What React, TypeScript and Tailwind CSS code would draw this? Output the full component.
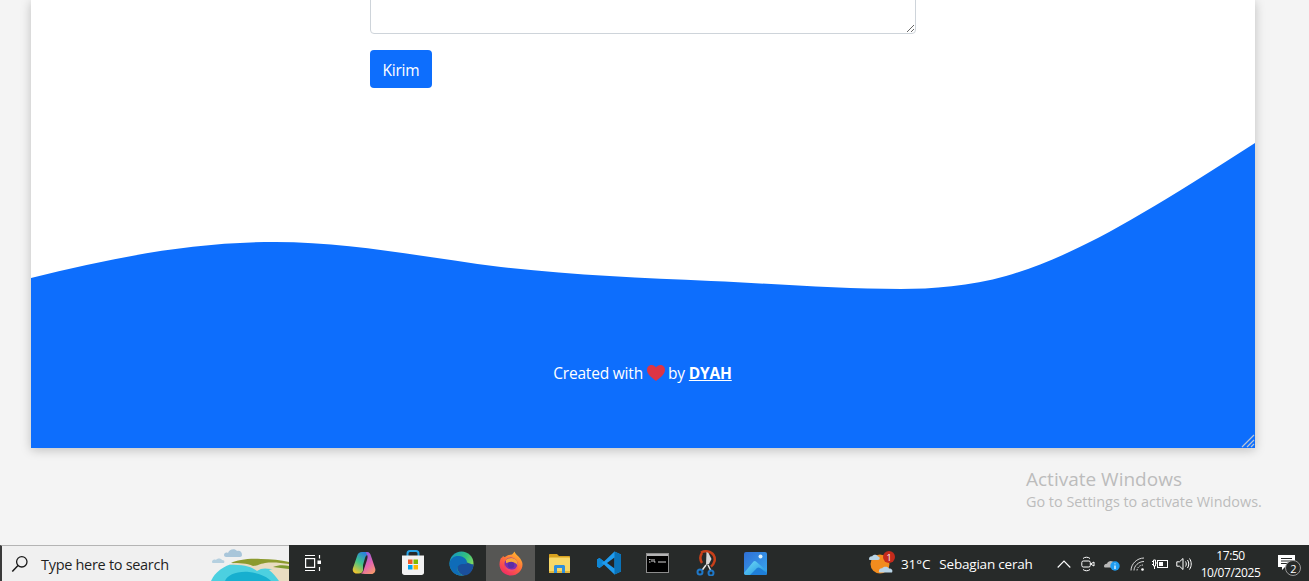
import React from 'react'

const uiFont = 'font-["Open_Sans","Noto_Sans",sans-serif]'

function SearchIcon() {
  return (
    <svg width="18" height="18" viewBox="0 0 18 18" fill="none" stroke="#1a1a1a" strokeWidth="1.3">
      <circle cx="10.800" cy="6.800" r="5.200" />
      <path d="M7 10.600 1.300 16.600" strokeWidth="1.500" />
    </svg>
  )
}

function Island() {
  return (
    <svg width="78" height="36" viewBox="0 0 78 36" className="block">
      <path d="M13 10c0-2 2-3 4-2 1-4 7-5 9-2 3-1 5 1 5 4 0 1-1 2-2 2H15c-1 0-2-1-2-2z" fill="#a9c6da" />
      <path d="M1 17c0-2 2-3 4-2 1-2 5-2 6 0 2 0 3 1 2 3H3c-1 0-2 0-2-1z" fill="#b5d0e0" />
      <path d="M0 36C4 27 12 21 24 18l54 2v16z" fill="#4cd0e0" />
      <path d="M18 20c8-4 22-6 36-5l24 2v12c-6-1-12-4-18-5-6-1-10-1-14 2-4-3-12-7-28-6z" fill="#e9dcc2" />
      <path d="M20 18c6-3 18-5 30-4 10 0 20 1 28 3v2c-8-1-16-2-24-1-6 1-8 3-12 3-6-3-14-3-22-3z" fill="#8c9a2e" />
      <path d="M14 36c2-6 12-10 24-9 10 1 18 5 22 9z" fill="#17afcf" />
      <path d="M58 25c6-2 14-2 20-1v12H68c-2-3-6-8-10-11z" fill="#e9dcc2" />
      <path d="M62 22c5-2 11-2 16-1v3c-6-1-11-1-16-2z" fill="#7f9a30" />
    </svg>
  )
}

function TaskView() {
  return (
    <svg width="18" height="18" viewBox="0 0 18 18" fill="none" stroke="#fff" strokeWidth="1.200">
      <path d="M1 1.500h10M1 16.500h10" />
      <rect x="1.600" y="4.600" width="9" height="8.800" />
      <path d="M15.500 1v3.500M15.500 13v4" />
      <rect x="13.500" y="6.500" width="3.500" height="3.500" fill="#fff" stroke="none" />
    </svg>
  )
}

function Copilot() {
  return (
    <svg width="24" height="24" viewBox="0 0 24 24">
      <defs>
        <linearGradient id="cpa" x1="0.700" y1="0" x2="0.200" y2="1">
          <stop offset="0" stopColor="#2a7fe0" />
          <stop offset="0.5" stopColor="#3fc48a" />
          <stop offset="1" stopColor="#f7c52c" />
        </linearGradient>
        <linearGradient id="cpb" x1="0.300" y1="0" x2="0.800" y2="1">
          <stop offset="0" stopColor="#8a5ce0" />
          <stop offset="0.55" stopColor="#e465b0" />
          <stop offset="1" stopColor="#f79a6a" />
        </linearGradient>
      </defs>
      <path d="M15 1H10C7.500 1 6 2.500 5.300 4.500L1 17c-1 3 1 5.500 3.500 5.500H7c2 0 3.500-1 4-3L11 14l2-7c.5-2 1.500-3 3-3l1-1.500C17 1.500 16 1 15 1z" fill="url(#cpa)" />
      <path d="M13 23h6.500c2.500 0 4.500-2.500 3.700-5.500L19 5c-.6-2.500-2-4-4.500-4-1 0-.5 1 .5 2.500 1 2 .5 4-.5 7L12 18c-.6 2-1 3.500-3 4.500z" fill="url(#cpb)" />
    </svg>
  )
}

function Store() {
  return (
    <svg width="24" height="26" viewBox="0 0 24 26">
      <path d="M6.500 6V3.500C6.500 2 7.500 1 9 1h6c1.500 0 2.500 1 2.500 2.500V6" fill="none" stroke="#27a3e6" strokeWidth="2" />
      <path d="M1 5.500h22v17c0 1.500-1 2.500-2.500 2.500h-17C2 25 1 24 1 22.500z" fill="#f2f2f2" />
      <rect x="7" y="9.500" width="4.500" height="4.500" fill="#f05a28" />
      <rect x="12.500" y="9.500" width="4.500" height="4.500" fill="#7fba00" />
      <rect x="7" y="15" width="4.500" height="4.500" fill="#00a4ef" />
      <rect x="12.500" y="15" width="4.500" height="4.500" fill="#ffb900" />
    </svg>
  )
}

function Edge() {
  return (
    <svg width="25" height="25" viewBox="0 0 25 25">
      <defs>
        <linearGradient id="edg" x1="0" y1="0" x2="1" y2="0.600">
          <stop offset="0" stopColor="#0f8fd0" />
          <stop offset="0.600" stopColor="#33c27f" />
          <stop offset="1" stopColor="#8fdc5c" />
        </linearGradient>
      </defs>
      <circle cx="12.500" cy="12.500" r="12" fill="url(#edg)" />
      <path d="M.5 12.500C1 7 6 4.500 10 5c5 .5 8 3.500 8 6.500 0 1.500-1.500 2.500-4 2.500-3 0-6 1-5.500 4.500.3 2.500 3 5.500 7 6C7 26 .5 20 .5 12.500z" fill="#0f6cb8" />
      <path d="M8.500 18c-.5-3.500 2.500-5 6-5 2 0 3.500-.5 3.500-1.500 2 1 6.500 2 6.500 2 0 4-2 8-5.500 10-2 1-4.500 1-5.500.5-2.500-1-4.700-3.500-5-6z" fill="#1a4f9c" />
    </svg>
  )
}

function Firefox() {
  return (
    <svg width="24" height="25" viewBox="0 0 24 25">
      <defs>
        <linearGradient id="ffx" x1="0.800" y1="0" x2="0.200" y2="1">
          <stop offset="0" stopColor="#ffc02e" />
          <stop offset="0.450" stopColor="#ff7139" />
          <stop offset="1" stopColor="#f0246a" />
        </linearGradient>
      </defs>
      <path d="M2 7c1 0 1.500-1 2-2 1 1 1.500 1 2 1 2-2 5-2.500 7-2.500C14 2.500 15 1.500 15.500.5c.5 2 2 3 4 5 3 3 4 6 4 8 0 6-5 11-11.500 11S.5 19.500.5 13.500C.5 11 1 9 2 7z" fill="url(#ffx)" />
      <circle cx="12" cy="13" r="6.500" fill="#7b2fb0" />
      <path d="M7 9c2-2 6-3 9-1 2 1.500 3 4 2.500 6.500C17 11.500 13 10 7 12z" fill="#f7a33a" />
      <circle cx="12" cy="14" r="3.300" fill="#5a2ea6" />
      <path d="M6 14c0 4 3 6.500 6 6.500 4 0 7-3 7-6-1 3-4 4.500-7 4-3-.3-5-2-6-4.500z" fill="#f5496e" />
    </svg>
  )
}

function Explorer() {
  return (
    <svg width="23" height="21" viewBox="0 0 23 21">
      <path d="M1 2c0-.6.4-1 1-1h7l2 2h10c.6 0 1 .4 1 1v2H1z" fill="#d8a21f" />
      <rect x="1" y="4.500" width="21" height="15.500" rx="1" fill="#f7d868" />
      <path d="M1 18h21v1c0 .6-.4 1-1 1H2c-.6 0-1-.4-1-1z" fill="#e1b53c" />
      <path d="M6 20v-6.500c0-.8.7-1.500 1.500-1.500h8c.8 0 1.500.7 1.500 1.500V20h-3v-5H9v5z" fill="#2f8fdc" />
    </svg>
  )
}

function VsCode() {
  return (
    <svg width="24" height="24" viewBox="0 0 24 24">
      <path d="M17.500.5 24 3.500v17l-6.500 3L7 13.500l-4.500 3.500L0 15.500V8.500L2.500 7 7 10.500z" fill="#1f9cf0" />
      <path d="M17.500 6.500 10 12l7.500 5.500z" fill="#232526" />
      <path d="M17.500.5 24 3.500v17l-6.500 3z" fill="#0a72b8" />
      <path d="M2.500 7 7 10.500 4.500 12 7 13.500l-4.500 3.500L0 15.500V8.500z" fill="#0f86d4" />
    </svg>
  )
}

function Terminal() {
  return (
    <svg width="23" height="20" viewBox="0 0 23 20">
      <rect x=".5" y=".5" width="22" height="19" fill="#000" stroke="#8d8d8d" />
      <rect x="1" y="1" width="21" height="2" fill="#b4b4b4" />
      <path d="M3 6.500h1.500M3 9h1.500M6 6v3M8 6v3h1.500M12 9h8" stroke="#d6d6d6" strokeWidth="1" fill="none" />
    </svg>
  )
}

function Snip() {
  return (
    <svg width="22" height="26" viewBox="0 0 22 26" fill="none">
      <path d="M5 2.500C9 .5 15 1 17.500 5c2.500 4 1 9-2.500 11.500M6 3c-2 3-2 7 0 10" stroke="#c9401a" strokeWidth="2.500" />
      <path d="M10.500 2 10 15l3-1 2.500-5-3-6z" fill="#d8d8d8" />
      <path d="M10 15 5.500 21M12 15l3 6" stroke="#e6e6e6" strokeWidth="1.500" />
      <circle cx="4" cy="22" r="2.500" stroke="#1f78c8" strokeWidth="2" />
      <circle cx="15" cy="23" r="2.500" stroke="#1f78c8" strokeWidth="2" />
    </svg>
  )
}

function Photos() {
  return (
    <svg width="23" height="23" viewBox="0 0 23 23">
      <defs>
        <linearGradient id="pho" x1="0" y1="0" x2="1" y2="1">
          <stop offset="0" stopColor="#2f6fd6" />
          <stop offset="1" stopColor="#38a7ee" />
        </linearGradient>
        <linearGradient id="phm" x1="0" y1="0" x2="1" y2="1">
          <stop offset="0" stopColor="#6fdcf6" />
          <stop offset="1" stopColor="#1f8fe0" />
        </linearGradient>
      </defs>
      <rect width="23" height="23" rx="2" fill="url(#pho)" />
      <circle cx="16.500" cy="4.500" r="2" fill="#dff2fb" />
      <path d="M0 21 9.500 9.500c.8-.8 1.800-.8 2.500 0L23 19v2c0 1-1 2-2 2H2c-1 0-2-1-2-2z" fill="url(#phm)" />
      <path d="M6 23 13 16c1-.8 2-.8 3 0l7 5c0 1-1 2-2 2z" fill="#1f7fd8" />
    </svg>
  )
}

function Weather() {
  return (
    <span className="relative block h-[24px] w-[26px]">
      <svg width="26" height="24" viewBox="0 0 26 24" className="block">
        <circle cx="12" cy="13" r="9.500" fill="#f28c1e" />
        <path d="M1 8c0-2 2-3 3-2.500C5 3 9 3 10 5.500c2 0 2.500 3.500 0 3.500H2c-.6 0-1-.5-1-1z" fill="#b9d4e6" />
        <path d="M11 20c0-2 2-3 3-2.500 1-2.500 6-2.500 7 0 3 0 4 2 3 4H12c-1 0-1.500-.8-1-1.500z" fill="#b9d4e6" />
      </svg>
      <span className="absolute right-[-1px] top-0 flex h-[12px] w-[12px] items-center justify-center rounded-full bg-[#c42b1c] text-[9px] leading-none text-white">
        1
      </span>
    </span>
  )
}

function TrayIcons() {
  return (
    <div className="flex items-center pt-[1px]">
      <svg width="14" height="8" viewBox="0 0 14 8" fill="none" stroke="#fff" strokeWidth="1.100" className="ml-[24px]">
        <path d="M.7 7.500 7 1l6.300 6.500" />
      </svg>
      <svg width="14" height="16" viewBox="0 0 14 16" fill="none" stroke="#fff" strokeWidth="1" className="ml-[10px]">
        <path d="M2 2.500C4 .8 7 .8 9 2.500M2 13.500c2 1.700 5 1.700 7 0" />
        <rect x=".8" y="5" width="8.500" height="6" rx="1.500" />
        <path d="M9.500 8 13 6v4z" />
      </svg>
      <span className="relative ml-[8px] block h-[14px] w-[17px]">
        <svg width="17" height="14" viewBox="0 0 17 14" className="block">
          <path d="M1 9.500C1 7.500 2.500 6.500 4 6.800 5 3.500 10 3 11.500 6.500c2 0 3 2 2.500 4H2.500C1.500 10.500 1 10 1 9.500z" fill="#b8b8b8" />
          <circle cx="12" cy="9" r="4.700" fill="#1f9cf0" />
          <path d="M12 6.500v.8M12 8.500V12" stroke="#fff" strokeWidth="1.200" />
        </svg>
      </span>
      <svg width="15" height="14" viewBox="0 0 15 14" fill="none" stroke="#d8d8d8" strokeWidth="1" className="ml-[10px]">
        <path d="M1 13.500C1 7 7 1 14 1M4 13.500C4 9 8.500 4.500 14 4.500" />
        <path d="M7 13.500c0-3 3-5.500 6-5.500" strokeDasharray="1.500 1" />
        <circle cx="12.500" cy="12.500" r="1.300" fill="#fff" stroke="none" />
      </svg>
      <svg width="16" height="12" viewBox="0 0 16 12" fill="none" stroke="#fff" strokeWidth="1" className="ml-[7px]">
        <rect x="5.500" y="2.500" width="10" height="7" />
        <rect x="7" y="4" width="4" height="4" fill="#fff" stroke="none" />
        <path d="M0 3.500h1.500M0 6.500h1.500M1.500 2h2v6h-2zM3.500 5h2M2.500 8v3" />
      </svg>
      <svg width="16" height="14" viewBox="0 0 16 14" fill="none" stroke="#fff" strokeWidth="1" className="ml-[8px]">
        <path d="M.8 4.800h2.700L7 1.500v11L3.500 9.200H.8z" />
        <path d="M9.500 4.500c1 1.500 1 3.500 0 5M11.500 3c1.700 2.500 1.700 5.500 0 8M13.500 1.500c2.300 3.300 2.300 7.700 0 11" />
      </svg>
    </div>
  )
}

function Taskbar() {
  const icons = [
    { key: 'copilot', node: <Copilot /> },
    { key: 'store', node: <Store /> },
    { key: 'edge', node: <Edge /> },
    { key: 'firefox', node: <Firefox />, active: true },
    { key: 'explorer', node: <Explorer /> },
    { key: 'vscode', node: <VsCode /> },
    { key: 'terminal', node: <Terminal /> },
    { key: 'snip', node: <Snip /> },
    { key: 'photos', node: <Photos /> },
  ]

  return (
    <div className={`flex h-[36px] shrink-0 items-stretch bg-[#272a29] text-white ${uiFont}`}>
      <div className="flex w-[289px] items-center border-l-2 border-t border-l-[#3a3a3a] border-t-[#b4b4b4] bg-[#f0f0f0] text-[#1f1f1f]">
        <div className="ml-[9px] flex w-[30px] items-center">
          <SearchIcon />
        </div>
        <span className="pt-[2px] text-[14.5px] tracking-[-0.3px]">Type here to search</span>
        <div className="ml-auto self-end">
          <Island />
        </div>
      </div>
      <div className="flex w-[48px] items-center justify-center">
        <TaskView />
      </div>
      <div className="flex w-[2px]" />
      {icons.map(icon => (
        <div
          key={icon.key}
          className={`flex w-[49px] items-center justify-center ${icon.active ? 'bg-[#565654]' : ''}`}
        >
          {icon.node}
        </div>
      ))}
      <div className="ml-[88px] flex items-center">
        <Weather />
        <span className="ml-[7px] pt-[3px] text-[13.5px] tracking-[-0.1px]">31°C</span>
        <span className="ml-[9px] pt-[3px] text-[13.5px] tracking-[-0.2px]">Sebagian cerah</span>
        <TrayIcons />
      </div>
      <div className="ml-[9px] flex flex-col items-center justify-center pt-[2px] text-[12px] leading-[17px] tracking-[-0.4px]">
        <span>17:50</span>
        <span>10/07/2025</span>
      </div>
      <div className="relative ml-[18px] flex items-center">
        <svg width="17" height="16" viewBox="0 0 17 16" className="block">
          <path d="M0 0h17v12H7l-3 3v-3H0z" fill="#fff" />
          <path d="M3 3.500h11M3 6h11M3 8.500h8" stroke="#272a29" strokeWidth="1" />
        </svg>
        <span className="absolute left-[7px] top-[15px] flex h-[16px] w-[16px] items-center justify-center rounded-full border border-[#9a9a9a] bg-[#272a29] text-[11px] leading-none">
          2
        </span>
      </div>
    </div>
  )
}

export default function App() {
  return (
    <div className={`flex h-[581px] w-[1309px] flex-col overflow-hidden bg-[#f4f4f4] ${uiFont}`}>
      <div className="relative flex-1">
        <div className="relative ml-[31px] h-[448px] w-[1224px] overflow-hidden bg-white shadow-[0_2px_10px_rgba(0,0,0,0.22)]">
          <div className="flow-root h-[143px] pl-[339px]">
            <textarea
              className="-mt-[40px] block h-[74px] w-[546px] resize-y rounded-[4px] border border-[#ced4da] bg-white"
              readOnly
            />
            <button className="mt-[16px] h-[38px] w-[62px] rounded-[4px] bg-[#0d6efd] pt-[4px] text-[15.5px] tracking-[-0.2px] text-white">
              Kirim
            </button>
          </div>
          <svg width="1224" height="157" viewBox="0 0 1224 157" className="block" preserveAspectRatio="none">
            <path
              d="M0 135C80 115 160 99 244 99C320 99 390 114 470 124C540 132 610 135 680 138C750 141 810 146 870 146C900 146 940 143 975 133C1040 114 1100 80 1224 0V157H0Z"
              fill="#0d6efd"
            />
          </svg>
          <div className="flex h-[148px] items-center justify-center bg-[#0d6efd] pr-[1px] text-[15.5px] tracking-[-0.2px] text-white">
            <span>Created with</span>
            <svg width="18" height="16" viewBox="0 0 18 16" className="ml-[4px] mr-[3px] -mt-[2px]">
              <path d="M9 16C5 13 0 9.500 0 4.800 0 2 2.200 0 4.800 0 6.500 0 8 .9 9 2.400 10 .9 11.500 0 13.200 0 15.800 0 18 2 18 4.800 18 9.500 13 13 9 16z" fill="#dc3545" />
            </svg>
            <span>by</span>
            <a className="ml-[4px] font-bold underline">DYAH</a>
          </div>
          <svg width="14" height="14" viewBox="0 0 14 14" className="absolute bottom-0 right-0" stroke="#b9c4d4" strokeWidth="1.200">
            <path d="M1 13 13 1M6 13l7-7M10 13l3-3" />
          </svg>
        </div>
        <div className="absolute left-[1026px] top-[466px] text-[#bcbcbc]">
          <div className="text-[19px] leading-[26px]">Activate Windows</div>
          <div className="text-[14.4px] leading-[20px]">Go to Settings to activate Windows.</div>
        </div>
      </div>
      <Taskbar />
    </div>
  )
}
